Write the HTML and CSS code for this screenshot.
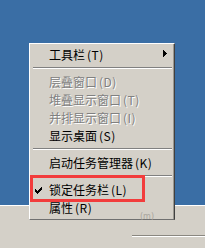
FILE: index.html
```html
<!DOCTYPE html>
<html lang="zh-CN">
<head>
<meta charset="utf-8">
<title>任务栏菜单</title>
<link rel="stylesheet" href="styles.css">
</head>
<body>
<div class="desktop"></div>
<div class="taskbar">
  <div class="groove"></div>
</div>

<div class="menu">
  <div class="item"><span class="gutter"></span><span class="label">工具栏<span class="key">(T)</span></span>
    <svg class="arrow" width="4" height="7" viewBox="0 0 4 7"><polygon points="0,0 4,3.5 0,7" fill="#000"/></svg>
  </div>
  <div class="sep"></div>
  <div class="item disabled"><span class="gutter"></span><span class="label">层叠窗口<span class="key">(D)</span></span></div>
  <div class="item disabled"><span class="gutter"></span><span class="label">堆叠显示窗口<span class="key">(T)</span></span></div>
  <div class="item disabled"><span class="gutter"></span><span class="label">并排显示窗口<span class="key">(I)</span></span></div>
  <div class="item"><span class="gutter"></span><span class="label">显示桌面<span class="key">(S)</span></span></div>
  <div class="sep"></div>
  <div class="item"><span class="gutter"></span><span class="label">启动任务管理器<span class="key">(K)</span></span></div>
  <div class="sep"></div>
  <div class="item"><span class="gutter"><svg class="check" width="7" height="7" viewBox="0 0 7 7"><polygon points="0,2 2,4 7,-1 7,2 2,7 0,5" fill="#000"/></svg></span><span class="label">锁定任务栏<span class="key">(L)</span></span></div>
  <div class="item"><span class="gutter"></span><span class="label">属性<span class="key">(R)</span></span></div>
</div>

<span class="ghost">(m)</span>
<div class="highlight"></div>
</body>
</html>
```
FILE: styles.css
```css
html, body {
  margin: 0;
  padding: 0;
}
body {
  width: 205px;
  height: 248px;
  overflow: hidden;
  position: relative;
  background: #3a6ea5;
  font-family: "Noto Sans CJK SC", "Liberation Sans", sans-serif;
  font-size: 12px;
  color: #000;
}
.desktop {
  height: 205px;
  background: #3a6ea5;
}
.taskbar {
  height: 43px;
  background: #d4d0c8;
  box-shadow: inset 0 1px #ffffff;
  padding-top: 30px;
  box-sizing: border-box;
}
.groove {
  margin-left: 132px;
  height: 0;
  border-top: 1px solid #8a8780;
  border-bottom: 1px solid #ffffff;
}
.menu {
  position: absolute;
  left: 29px;
  top: 43px;
  width: 146px;
  box-sizing: border-box;
  background: #d4d0c8;
  border-top: 1px solid #ffffff;
  border-left: 1px solid #ffffff;
  border-right: 1px solid #404040;
  border-bottom: 1px solid #707070;
  box-shadow: inset -1px 0 #9a9790;
  padding: 2px 1px 2px 1px;
}
.item {
  display: flex;
  align-items: center;
  height: 18px;
  line-height: 18px;
  white-space: nowrap;
}
.gutter {
  width: 18px;
  flex: none;
  display: flex;
  align-items: center;
}
.check {
  display: block;
  margin-left: 4px;
  margin-top: 1px;
  shape-rendering: crispEdges;
}
.label {
  flex: 1;
}
.key {
  margin-left: 2px;
  letter-spacing: 0.5px;
}
.arrow {
  display: block;
  margin-right: 6px;
  margin-top: -3px;
  shape-rendering: crispEdges;
}
.disabled .label {
  color: #808080;
  text-shadow: 1px 1px 0 #ffffff;
}
.sep {
  height: 9px;
  margin: 0 1px 0 2px;
  box-sizing: border-box;
  padding-top: 3px;
}
.sep::before {
  content: "";
  display: block;
  border-top: 1px solid #808080;
  border-bottom: 1px solid #ffffff;
}
.highlight {
  position: absolute;
  left: 30px;
  top: 175px;
  width: 115px;
  height: 27px;
  box-sizing: border-box;
  border: 3px solid #f23c3c;
}
.ghost {
  position: absolute;
  left: 140px;
  top: 212px;
  font-family: "DejaVu Sans", sans-serif;
  font-size: 8px;
  line-height: 10px;
  color: #a9a59d;
}
```
